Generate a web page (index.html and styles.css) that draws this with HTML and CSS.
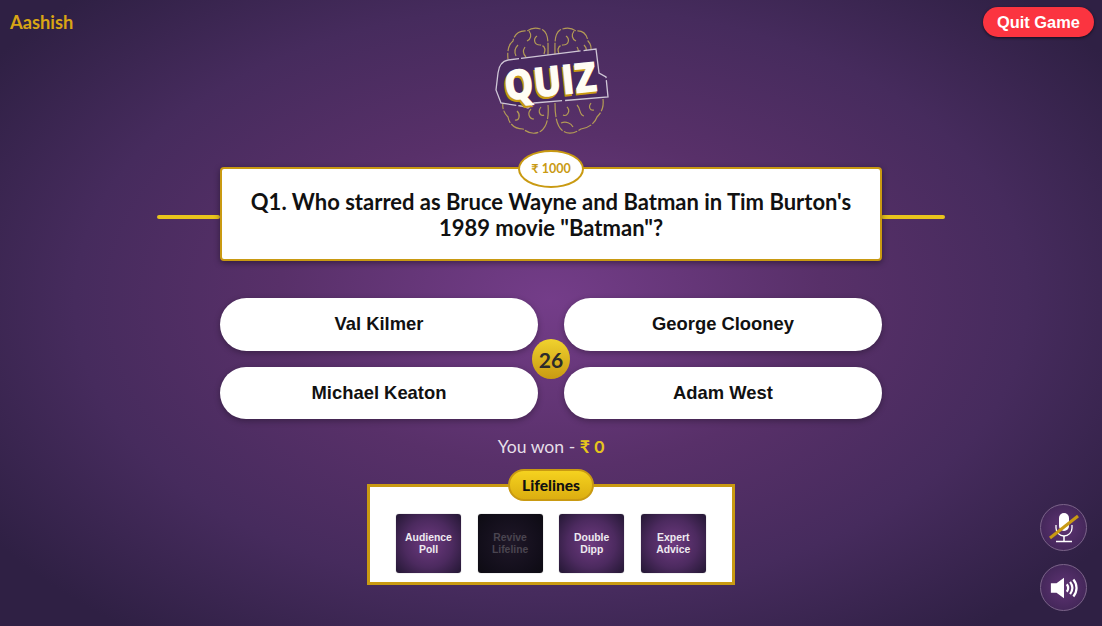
FILE: index.html
```html
<!DOCTYPE html>
<html lang="en">
<head>
  <meta charset="UTF-8">
  <meta name="viewport" content="width=device-width, initial-scale=1.0">
  <title>Quiz Game</title>
  <link rel="stylesheet" href="styles.css">
</head>
<body>
  <div class="game">
    <!-- Header -->
    <div class="top-bar">
      <div class="player-name">Aashish</div>
      <svg class="logo" viewBox="0 0 114 108" aria-label="Quiz logo">
        <!-- brain -->
        <g class="brain">
          <path d="M53 30 C53 16 54 7 48 3 C42 0 36 1 32 4 C24 3 19 8 18 14 C14 17 12 23 13 32"/>
          <path d="M60 30 C60 16 59 7 65 3 C71 0 77 1 81 4 C88 3 92 8 93 14 C96 17 97 22 95 28"/>
          <path d="M34 4 C37 8 36 12 32 14 M42 9 C38 12 39 18 45 18 C49 18 51 22 49 27 M23 18 C20 21 19 25 21 29 M30 20 C28 23 28 27 31 30"/>
          <path d="M79 4 C76 8 77 12 81 14 M71 9 C75 12 74 18 68 18 C64 18 62 22 64 27 M89 18 C92 21 92 24 90 27 M82 20 C84 23 84 25 82 28"/>
          <path d="M53 78 C54 90 52 100 46 104 C40 108 33 106 28 102 C20 102 14 97 13 90 C9 86 7 81 8 76"/>
          <path d="M60 76 C60 90 62 100 68 104 C74 108 80 106 86 102 C94 101 100 96 102 90 C107 85 109 79 108 72"/>
          <path d="M36 82 C32 86 34 92 39 92 M46 80 C42 85 46 90 49 88 M22 84 C26 88 24 94 20 93"/>
          <path d="M72 80 C76 84 72 90 68 88 M82 78 C86 82 84 88 89 89 M96 76 C93 80 95 84 99 83 M66 96 C71 94 76 96 78 100"/>
        </g>
        <!-- speech bubble -->
        <path class="bubble" d="M1 63 L3 46 C4 38 7 34 13 33 L101 22 L104 46 L111 50 L113 70 L39 76 L33 81 L26 79 L6 76 Z"/>
        <text class="logo-shadow" x="7" y="71" textLength="94" lengthAdjust="spacingAndGlyphs" transform="rotate(-6 56 55)">QUIZ</text>
        <text class="logo-text" x="9" y="69" textLength="93" lengthAdjust="spacingAndGlyphs" transform="rotate(-6 56 55)">QUIZ</text>
      </svg>
      <div class="top-right">
        <button class="quit-btn">Quit Game</button>
      </div>
    </div>

    <!-- Question -->
    <div class="question-row">
      <span class="line"></span>
      <div class="question-box">
        <div class="prize">₹ 1000</div>
        Q1. Who starred as Bruce Wayne and Batman in Tim Burton's 1989 movie "Batman"?
      </div>
      <span class="line"></span>
    </div>

    <!-- Options -->
    <div class="options">
      <button class="option">Val Kilmer</button>
      <button class="option">George Clooney</button>
      <button class="option">Michael Keaton</button>
      <button class="option">Adam West</button>
      <div class="timer">26</div>
    </div>

    <div class="winnings">You won - <span class="amount">₹ 0</span></div>

    <!-- Lifelines -->
    <div class="lifelines">
      <div class="lifelines-title">Lifelines</div>
      <button class="lifeline">Audience Poll</button>
      <button class="lifeline used">Revive Lifeline</button>
      <button class="lifeline">Double Dipp</button>
      <button class="lifeline">Expert Advice</button>
    </div>
  </div>

  <!-- Mic and sound -->
  <div class="controls">
    <button class="round-btn" aria-label="Microphone off">
      <svg viewBox="0 0 32 32" width="32" height="32">
        <rect x="11" y="1" width="10" height="18" rx="5" fill="#fff"/>
        <path d="M8 13v3a8 8 0 0 0 16 0v-3" fill="none" stroke="#fff" stroke-width="1.3"/>
        <path d="M16 24v5M8 29.500h16" fill="none" stroke="#fff" stroke-width="1.5"/>
        <path d="M2 26L30 4" stroke="#c99a12" stroke-width="3"/>
      </svg>
    </button>
    <button class="round-btn" aria-label="Sound on">
      <svg viewBox="0 0 32 32" width="30" height="30">
        <path d="M2 11h6l8-6v22l-8-6H2z" fill="#fff"/>
        <path d="M19 12c1.800 2.500 1.800 5.500 0 8M22.500 9.500c3 4 3 9 0 13M26 7c4.500 5.500 4.500 12.500 0 18" fill="none" stroke="#fff" stroke-width="2.400"/>
      </svg>
    </button>
  </div>
</body>
</html>
```

FILE: styles.css
```css
* {
  box-sizing: border-box;
}

body {
  margin: 0;
  height: 626px;
  overflow: hidden;
  position: relative;
  font-family: Lato, sans-serif;
  background: radial-gradient(ellipse 680px 420px at 551px 300px, #743d89 0%, #583069 40%, #462b5d 70%, #2f2044 100%);
  background-color: #2f2044;
}

.game {
  display: flex;
  flex-direction: column;
  align-items: center;
}

.top-bar {
  width: 100%;
  display: grid;
  grid-template-columns: 1fr 114px 1fr;
  padding: 7px 8px 0 10px;
  height: 150px;
}

.player-name {
  font-size: 18.3px;
  font-weight: 700;
  color: #d9a514;
  line-height: 30px;
}

.logo {
  width: 114px;
  height: 108px;
  margin-top: 20px;
  overflow: visible;
}

.brain path {
  fill: none;
  stroke: #b39a55;
  stroke-width: 1.2;
  stroke-dasharray: 14 1.5;
}

.bubble {
  fill: #48295f;
  stroke: #cfc6d6;
  stroke-width: 1.3;
  stroke-dasharray: 46 2 60 3;
}

.logo-text,
.logo-shadow {
  font-family: "Open Sans", sans-serif;
  font-size: 42px;
  font-weight: 800;
}

.logo-text {
  fill: #fffdf4;
}

.logo-shadow {
  fill: #c99a12;
}

.top-right {
  display: flex;
  justify-content: flex-end;
}

.quit-btn {
  height: 30px;
  width: 111px;
  border: none;
  border-radius: 15px;
  background-color: #fb3440;
  color: #fff;
  font-family: "Liberation Sans", sans-serif;
  font-size: 16.4px;
  font-weight: 700;
  box-shadow: 0 1px 3px rgba(0, 0, 0, 0.6);
}

.question-row {
  display: flex;
  align-items: center;
  margin-top: 17px;
}

.line {
  width: 63px;
  height: 4px;
  margin-top: 5px;
  background-color: #e8c41c;
  border-radius: 2px;
}

.line:last-child {
  width: 64px;
  margin-left: -1px;
}

.question-box {
  position: relative;
  width: 662px;
  height: 94px;
  padding: 20px 20px 0;
  background-color: #fff;
  border: 2px solid #c99a12;
  border-radius: 4px;
  box-shadow: 0 2px 6px rgba(0, 0, 0, 0.4);
  color: #111;
  font-size: 22px;
  font-weight: 700;
  line-height: 26px;
  text-align: center;
}

.prize {
  position: absolute;
  top: -19px;
  left: 296px;
  width: 66px;
  height: 38px;
  border: 2px solid #c99a12;
  border-radius: 50%;
  background-color: #fff;
  color: #c99a12;
  font-size: 12.5px;
  font-weight: 700;
  line-height: 34px;
}

.options {
  position: relative;
  width: 662px;
  display: grid;
  grid-template-columns: 318px 318px;
  justify-content: space-between;
  row-gap: 16px;
  margin-top: 37px;
}

.option {
  height: 52.5px;
  border: none;
  border-radius: 27px;
  background-color: #fff;
  color: #111;
  font-family: "Liberation Sans", sans-serif;
  font-size: 18.4px;
  font-weight: 700;
  box-shadow: 0 2px 6px rgba(0, 0, 0, 0.3);
}

.timer {
  position: absolute;
  top: 41px;
  left: 312px;
  width: 38px;
  height: 40px;
  border-radius: 50%;
  background: linear-gradient(to bottom, #f0d22e, #c99a12);
  color: #2b2b2b;
  font-size: 21px;
  font-weight: 700;
  line-height: 41px;
  text-align: center;
}

.winnings {
  margin-top: 16px;
  color: #e6dfe8;
  font-size: 17.6px;
  line-height: 24px;
}

.amount {
  color: #e7c51c;
  font-weight: 700;
}

.lifelines {
  position: relative;
  width: 368px;
  height: 101px;
  margin-top: 25px;
  padding: 27px 26px 0 26px;
  display: flex;
  gap: 16.6px;
  background-color: #fff;
  border: 3px solid #c99a12;
}

.lifelines-title {
  position: absolute;
  top: -18px;
  left: 138px;
  width: 86px;
  height: 32px;
  border: 2px solid #c99a12;
  border-radius: 16px;
  background: linear-gradient(to bottom, #f5d21f, #dcae10);
  color: #111;
  font-size: 15.5px;
  font-weight: 900;
  line-height: 28px;
  text-align: center;
}

.lifeline {
  width: 65px;
  height: 59px;
  padding: 0 3px;
  border: none;
  border-radius: 3px;
  background: radial-gradient(circle, #6e3a80 0%, #4c2a5f 55%, #231733 100%);
  color: #eeeaf0;
  font-family: "Liberation Sans", sans-serif;
  font-size: 10.4px;
  font-weight: 700;
  line-height: 12px;
  box-shadow: 0 0 1px rgba(0, 0, 0, 0.5);
}

.lifeline.used {
  background: radial-gradient(circle, #1f1728 0%, #120e1a 70%, #0d0b12 100%);
  color: #4a4550;
}

.controls {
  position: absolute;
  right: 15px;
  bottom: 15px;
  display: flex;
  flex-direction: column;
  gap: 13px;
}

.round-btn {
  width: 47px;
  height: 47px;
  padding: 0;
  display: flex;
  align-items: center;
  justify-content: center;
  border: 1px solid #7b6389;
  border-radius: 50%;
  background: radial-gradient(circle, #5f3374 0%, #3a2350 100%);
}
```
